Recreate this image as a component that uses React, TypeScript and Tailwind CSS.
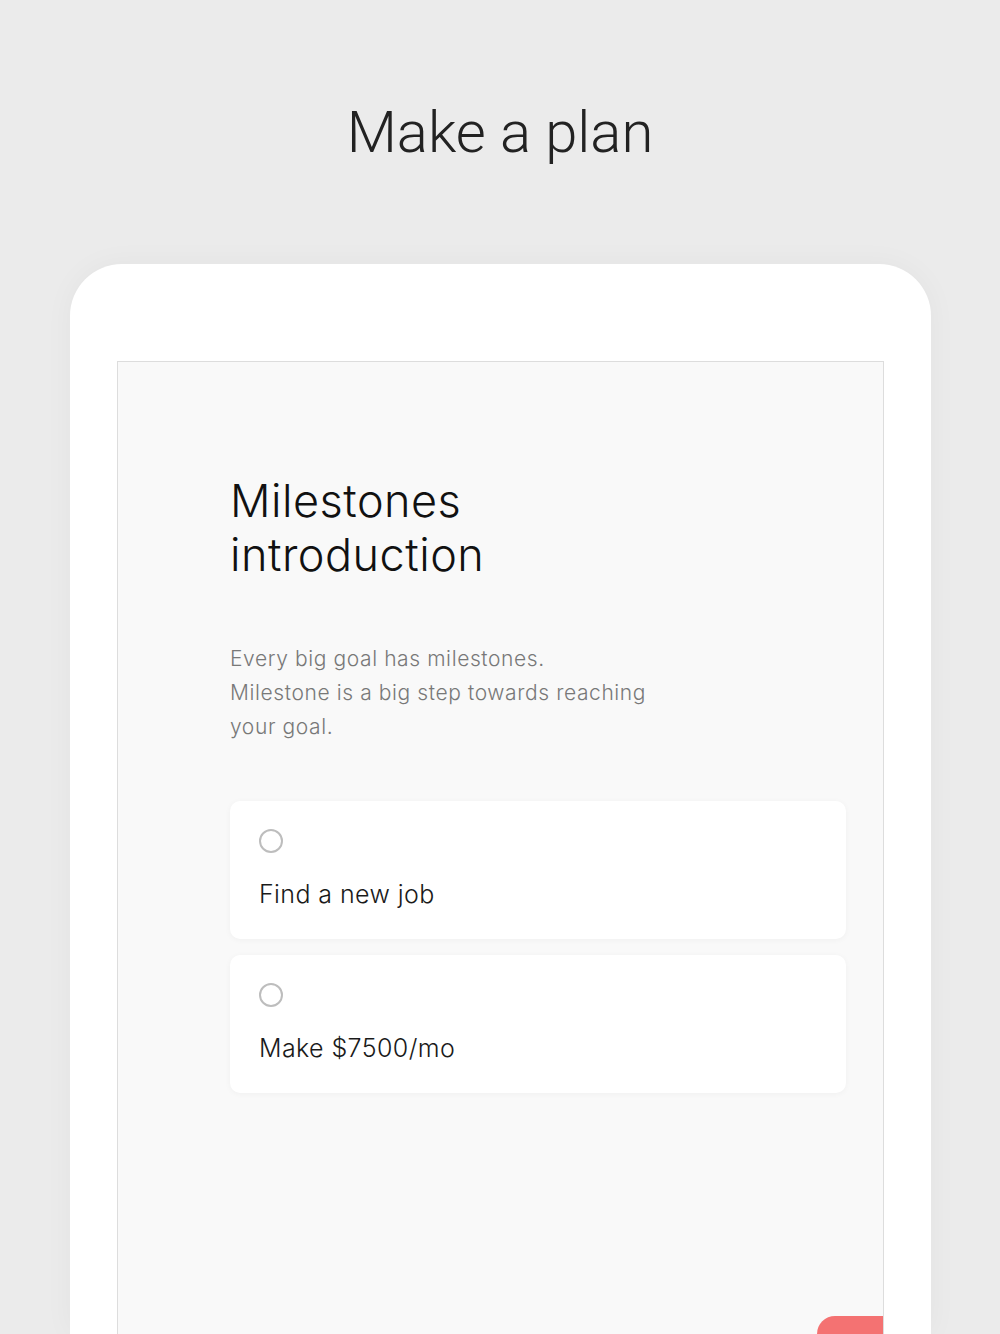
export default function App() {
  return (
    <div
      className="h-[1334px] w-full overflow-hidden bg-[#ebebeb] flex flex-col"
      style={{ fontFamily: "Roboto, 'Noto Sans', sans-serif" }}
    >
      {/* Title */}
      <h1 className="pt-[96px] text-center text-[58px] leading-[72px] font-light text-[#222]">
        Make a plan
      </h1>

      {/* Device frame */}
      <div className="mt-[96px] ml-[70px] w-[861px] flex-1 bg-white rounded-t-[52px] px-[47px] pt-[97px] shadow-[0_0_30px_rgba(0,0,0,0.04)]">
        <div
          className="relative h-full border border-[#dddddd] border-b-0 bg-[#f9f9f9] pl-[112px] pr-[37px] pt-[112px]"
          style={{ fontFamily: "Inter, Roboto, sans-serif" }}
        >
          <h2 className="text-[45px] leading-[54px] font-light tracking-[0.5px] text-[#111]">
            Milestones
            <br />
            introduction
          </h2>
          <p className="mt-[60px] w-[440px] text-[21px] leading-[34px] font-light tracking-[0.6px] text-[#787878]">
            Every big goal has milestones.
            <br />
            Milestone is a big step towards reaching your goal.
          </p>

          <div className="mt-[57px] flex flex-col gap-[16px]">
            {["Find a new job", "Make $7500/mo"].map((t) => (
              <div
                key={t}
                className="h-[138px] rounded-[10px] bg-white px-[29px] pt-[28px] shadow-[0_1px_6px_rgba(0,0,0,0.04)]"
              >
                <div className="h-[24px] w-[24px] rounded-full border-[2.5px] border-[#bdbdbd]" />
                <div className="mt-[26px] text-[25px] leading-[30px] font-light tracking-[0.4px] text-[#1a1a1a]">{t}</div>
              </div>
            ))}
          </div>

          <div className="absolute right-0 bottom-0 h-[18px] w-[66px] rounded-tl-[22px] bg-[#f47272]" />
        </div>
      </div>
    </div>
  );
}
